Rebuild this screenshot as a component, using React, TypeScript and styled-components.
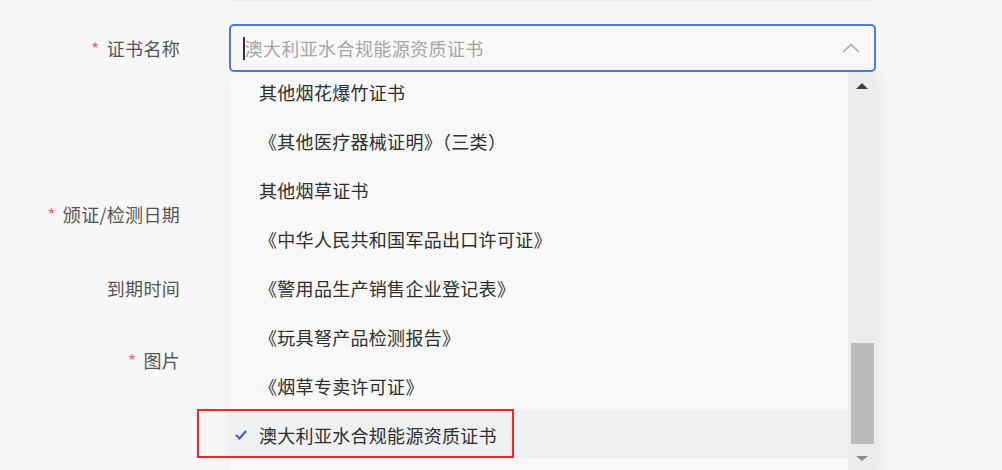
import React from 'react'
import styled, { createGlobalStyle } from 'styled-components'

const GlobalStyle = createGlobalStyle`
  html, body {
    margin: 0;
    padding: 0;
    background: #f7f7f7;
    font-family: "Noto Sans CJK SC", "Noto Sans", sans-serif;
  }
`

const Page = styled.div`
  position: relative;
  width: 1002px;
  height: 470px;
  overflow: hidden;
  background: #f7f7f7;
`

const TopEdge = styled.div`
  margin-left: 232px;
  width: 640px;
  height: 1px;
  background: #ececec;
`

const Form = styled.div`
  display: flex;
  flex-direction: column;
  padding-top: 23px;
`

const FormItem = styled.div<{ $gap: number }>`
  display: flex;
  align-items: center;
  height: 48px;
  margin-bottom: ${(p) => p.$gap}px;
`

const Label = styled.label`
  width: 180px;
  flex-shrink: 0;
  text-align: right;
  font-size: 18px;
  line-height: 48px;
  color: #545454;
  letter-spacing: 0.3px;
`

const Star = styled.span`
  color: #f56c6c;
  margin-right: 7px;
`

const Control = styled.div`
  position: relative;
  margin-left: 49px;
  width: 647px;
  height: 48px;
`

const SelectBox = styled.div`
  box-sizing: border-box;
  display: flex;
  align-items: center;
  height: 48px;
  padding: 0 12px;
  border: 2px solid #4a79f5;
  border-radius: 5px;
  background: #f8f8f8;
`

const Caret = styled.span`
  width: 1.5px;
  height: 23px;
  background: #333;
`

const Placeholder = styled.span`
  flex: 1;
  font-size: 18px;
  color: #a6a6a6;
  letter-spacing: 0.4px;
`

const Chevron = styled.svg`
  width: 18px;
  height: 10px;
  margin-right: 2px;
`

const Dropdown = styled.div`
  position: absolute;
  top: 48px;
  left: 0;
  width: 647px;
  height: 400px;
  display: flex;
  background: #f8f8f8;
  box-shadow: 4px 4px 14px rgba(0, 0, 0, 0.07);
  overflow: hidden;
`

const List = styled.ul`
  flex: 1;
  list-style: none;
  margin: -5px 0 0;
  padding: 0;
`

const Item = styled.li<{ $selected?: boolean }>`
  display: flex;
  align-items: center;
  height: 49px;
  padding-left: 30px;
  font-size: 18px;
  color: #2e2e2e;
  letter-spacing: 0.3px;
  background: ${(p) => (p.$selected ? '#eef0f2' : 'transparent')};
  position: relative;
`

const Check = styled.svg`
  position: absolute;
  left: 6px;
  top: 20px;
  width: 12px;
  height: 10px;
`

const ScrollTrack = styled.div`
  width: 28px;
  flex-shrink: 0;
  display: flex;
  flex-direction: column;
  align-items: center;
  background: #ececec;
`

const ArrowBtn = styled.div<{ $down?: boolean; $color: string }>`
  height: 28px;
  width: 100%;
  display: flex;
  align-items: center;
  justify-content: center;
  &::after {
    content: '';
    border-left: 6px solid transparent;
    border-right: 6px solid transparent;
    ${(p) =>
      p.$down
        ? `border-top: 5px solid ${p.$color};`
        : `border-bottom: 6px solid ${p.$color};`}
  }
`

const Spacer = styled.div`
  flex: 1;
`

const Thumb = styled.div`
  width: 23px;
  height: 101px;
  margin-left: 1px;
  background: #bcbcbc;
`

const Highlight = styled.div`
  position: absolute;
  left: 197px;
  top: 409px;
  width: 317px;
  height: 49px;
  box-sizing: border-box;
  border: 2px solid #f22;
  pointer-events: none;
`

const options = [
  '其他烟花爆竹证书',
  '《其他医疗器械证明》（三类）',
  '其他烟草证书',
  '《中华人民共和国军品出口许可证》',
  '《警用品生产销售企业登记表》',
  '《玩具弩产品检测报告》',
  '《烟草专卖许可证》',
  '澳大利亚水合规能源资质证书',
]

const selected = '澳大利亚水合规能源资质证书'

function App(): JSX.Element {
  return (
    <Page>
      <GlobalStyle />
      <TopEdge />
      <Form>
        <FormItem $gap={118}>
          <Label>
            <Star>*</Star>证书名称
          </Label>
          <Control>
            <SelectBox>
              <Caret />
              <Placeholder>澳大利亚水合规能源资质证书</Placeholder>
              <Chevron viewBox="0 0 18 10">
                <polyline points="1,9 9,1.5 17,9" fill="none" stroke="#b0aaa6" strokeWidth="1.6" />
              </Chevron>
            </SelectBox>
            <Dropdown>
              <List>
                {options.map((o) => (
                  <Item key={o} $selected={o === selected}>
                    {o === selected && (
                      <Check viewBox="0 0 12 10">
                        <polyline points="1,5 4.5,8.5 11,1" fill="none" stroke="#3d5cf0" strokeWidth="2.2" />
                      </Check>
                    )}
                    {o}
                  </Item>
                ))}
              </List>
              <ScrollTrack>
                <ArrowBtn $color="#404040" />
                <Spacer />
                <Thumb />
                <ArrowBtn $down $color="#8a8a8a" />
              </ScrollTrack>
            </Dropdown>
          </Control>
        </FormItem>
        <FormItem $gap={26}>
          <Label>
            <Star>*</Star>颁证/检测日期
          </Label>
        </FormItem>
        <FormItem $gap={24}>
          <Label>到期时间</Label>
        </FormItem>
        <FormItem $gap={0}>
          <Label>
            <Star>*</Star>图片
          </Label>
        </FormItem>
      </Form>
      <Highlight />
    </Page>
  )
}

export default App
